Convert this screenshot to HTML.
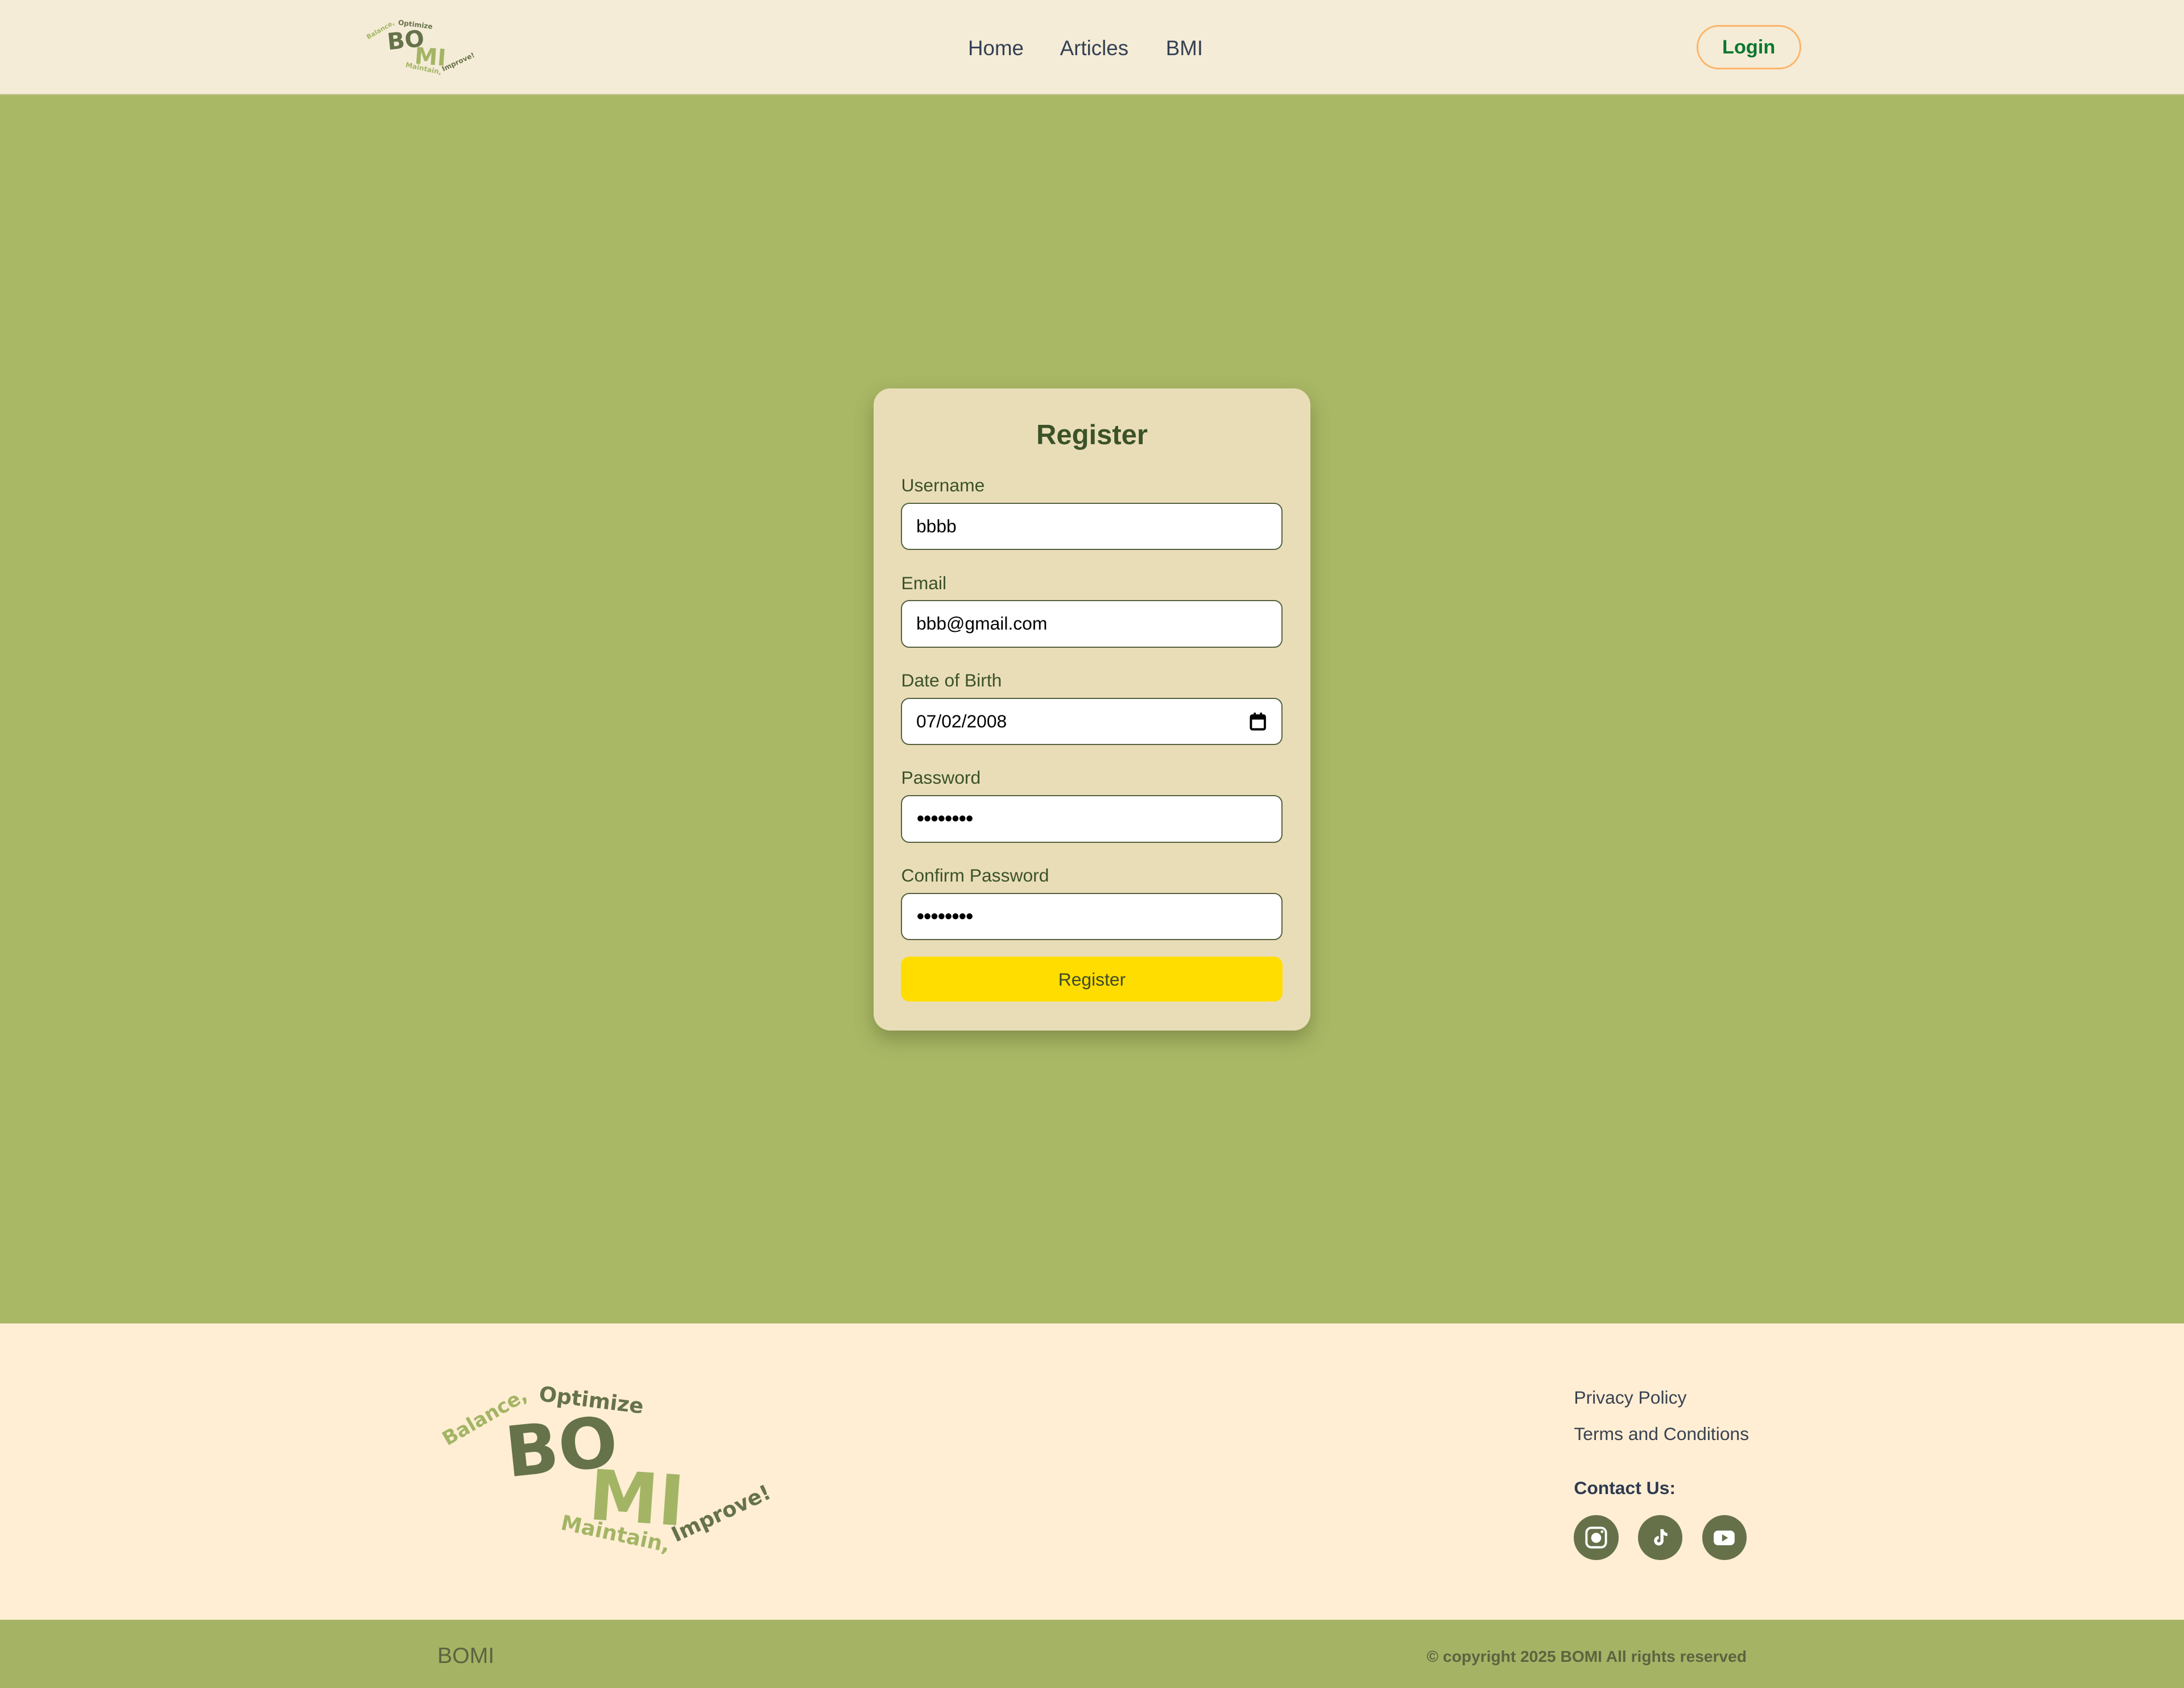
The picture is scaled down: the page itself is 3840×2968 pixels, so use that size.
<!DOCTYPE html>
<html><head><meta charset="utf-8">
<style>
*{box-sizing:border-box;margin:0;padding:0}
html,body{width:3840px;height:2968px;overflow:hidden;background:#a9b865}
#root{zoom:2.44898;width:1568px;height:1212px;position:relative;font-family:"Liberation Sans",sans-serif;}
.abs{position:absolute}
header{position:absolute;left:0;top:0;width:1568px;height:68px;background:#f5ecd7;border-bottom:1px solid #c9c79a}
.nav{position:absolute;top:26px;font-size:15px;color:#344054}
.login{position:absolute;left:1218px;top:18px;width:75px;height:32px;border:1.5px solid #fbb56a;border-radius:16px;color:#08782f;font-size:14px;font-weight:bold;text-align:center;line-height:30px}
main{position:absolute;left:0;top:68px;width:1568px;height:882px;background:#a9b865}
.card{position:absolute;left:627px;top:279px;width:314px;height:461px;background:#e9ddb8;border-radius:12px;box-shadow:0 6px 14px rgba(60,70,30,.35)}
.card h1{position:absolute;left:0;width:314px;top:22px;text-align:center;font-size:20px;font-weight:bold;color:#3b5229}
.lbl{position:absolute;left:20px;font-size:13px;color:#3b5229}
.inp{position:absolute;left:20px;width:274px;height:34px;background:#fff;border:1px solid #55603f;border-radius:6px;font-size:13px;color:#000;padding-left:10px;line-height:32px}
.btn{position:absolute;left:20px;top:408px;width:274px;height:32px;background:#ffdd00;border-radius:6px;text-align:center;line-height:33px;font-size:13px;color:#3b4a2a}
footer{position:absolute;left:0;top:950px;width:1568px;height:213px;background:#ffeed4}
.bar{position:absolute;left:0;top:1163px;width:1568px;height:49px;background:#a5b365}
.logo{position:absolute;width:240px;height:130px;transform-origin:0 0}
.logo span{position:absolute;font-family:"DejaVu Sans",sans-serif;font-weight:bold;white-space:nowrap;transform-origin:0 50%}
.dk{color:#65724a}.lt{color:#a3b565}
.ic{position:absolute;top:138px;width:32px;height:32px;border-radius:50%;background:#66714a}
.ic svg{position:absolute;left:6px;top:6px}
</style></head><body><div id="root">
<header>
 <div class="logo" style="left:262px;top:12px;transform:scale(0.33)">
  <span class="lt" style="left:4px;top:38px;font-size:14px;transform:rotate(-30deg)">Balance,</span>
  <span class="dk" style="left:72px;top:4px;font-size:15px;transform:rotate(7deg)">Optimize</span>
  <span class="dk" style="left:48px;top:26px;font-size:50px;transform:rotate(-6deg)">BO</span>
  <span class="lt" style="left:108px;top:56px;font-size:50px;transform:rotate(4deg)">MI</span>
  <span class="lt" style="left:88px;top:96px;font-size:15px;transform:rotate(12deg)">Maintain,</span>
  <span class="dk" style="left:168px;top:106px;font-size:15px;transform:rotate(-25deg)">Improve!</span>
 </div>
 <div class="nav" style="left:695px">Home</div>
 <div class="nav" style="left:761px">Articles</div>
 <div class="nav" style="left:837px">BMI</div>
 <div class="login">Login</div>
</header>
<main></main>
<div class="card">
 <h1>Register</h1>
 <div class="lbl" style="top:62px">Username</div>
 <div class="inp" style="top:82px">bbbb</div>
 <div class="lbl" style="top:132px">Email</div>
 <div class="inp" style="top:152px">bbb@gmail.com</div>
 <div class="lbl" style="top:202px">Date of Birth</div>
 <div class="inp" style="top:222px">07/02/2008
  <svg class="abs" style="right:11px;top:10px" width="12" height="13" viewBox="0 0 12 13"><rect x="1" y="2" width="10" height="10" rx="1" fill="none" stroke="#000" stroke-width="1.6"/><rect x="1" y="2" width="10" height="3" fill="#000"/><rect x="3" y="0" width="1.5" height="3" fill="#000"/><rect x="7.5" y="0" width="1.5" height="3" fill="#000"/></svg></div>
 <div class="lbl" style="top:272px">Password</div>
 <div class="inp" style="top:292px;font-size:10px;letter-spacing:-1px">●●●●●●●●</div>
 <div class="lbl" style="top:342px">Confirm Password</div>
 <div class="inp" style="top:362px;font-size:10px;letter-spacing:-1px">●●●●●●●●</div>
 <div class="btn">Register</div>
</div>
<footer>
 <div class="logo" style="left:315px;top:38px">
  <span class="lt" style="left:4px;top:38px;font-size:14px;transform:rotate(-30deg)">Balance,</span>
  <span class="dk" style="left:72px;top:4px;font-size:15px;transform:rotate(7deg)">Optimize</span>
  <span class="dk" style="left:48px;top:26px;font-size:50px;transform:rotate(-6deg)">BO</span>
  <span class="lt" style="left:108px;top:56px;font-size:50px;transform:rotate(4deg)">MI</span>
  <span class="lt" style="left:88px;top:96px;font-size:15px;transform:rotate(12deg)">Maintain,</span>
  <span class="dk" style="left:168px;top:106px;font-size:15px;transform:rotate(-25deg)">Improve!</span>
 </div>
 <div class="abs" style="left:1130px;top:46px;font-size:13px;color:#3a4150">Privacy Policy</div>
 <div class="abs" style="left:1130px;top:72px;font-size:13px;color:#3a4150">Terms and Conditions</div>
 <div class="abs" style="left:1130px;top:111px;font-size:13px;font-weight:bold;color:#2d3a50">Contact Us:</div>
 <div class="ic" style="left:1130px"><svg width="20" height="20" viewBox="0 0 20 20"><rect x="3" y="3" width="14" height="14" rx="3.5" fill="none" stroke="#fff" stroke-width="1.6"/><circle cx="10" cy="10.2" r="3.6" fill="#fff"/><circle cx="14.2" cy="5.8" r="1" fill="#fff"/></svg></div>
 <div class="ic" style="left:1176px"><svg width="20" height="20" viewBox="0 0 20 20"><path d="M10 4h2.2c.2 1.6 1.2 2.6 2.8 2.8v2.1c-1.1 0-2-.3-2.8-.9v4.3a3.4 3.4 0 1 1-3.4-3.4v2.2a1.2 1.2 0 1 0 1.2 1.2z" fill="#fff"/></svg></div>
 <div class="ic" style="left:1222px"><svg width="20" height="20" viewBox="0 0 20 20"><rect x="2.5" y="5" width="15" height="10.5" rx="3" fill="#fff"/><path d="M8.5 7.6v5.2l4.3-2.6z" fill="#66714a"/></svg></div>
</footer>
<div class="bar">
 <div class="abs" style="left:314px;top:17px;font-size:16px;color:#5a6440">BOMI</div>
 <div class="abs" style="right:314px;top:20px;font-size:11.5px;font-weight:bold;color:#5a6440">© copyright 2025 BOMI All rights reserved</div>
</div>
</div></body></html>
